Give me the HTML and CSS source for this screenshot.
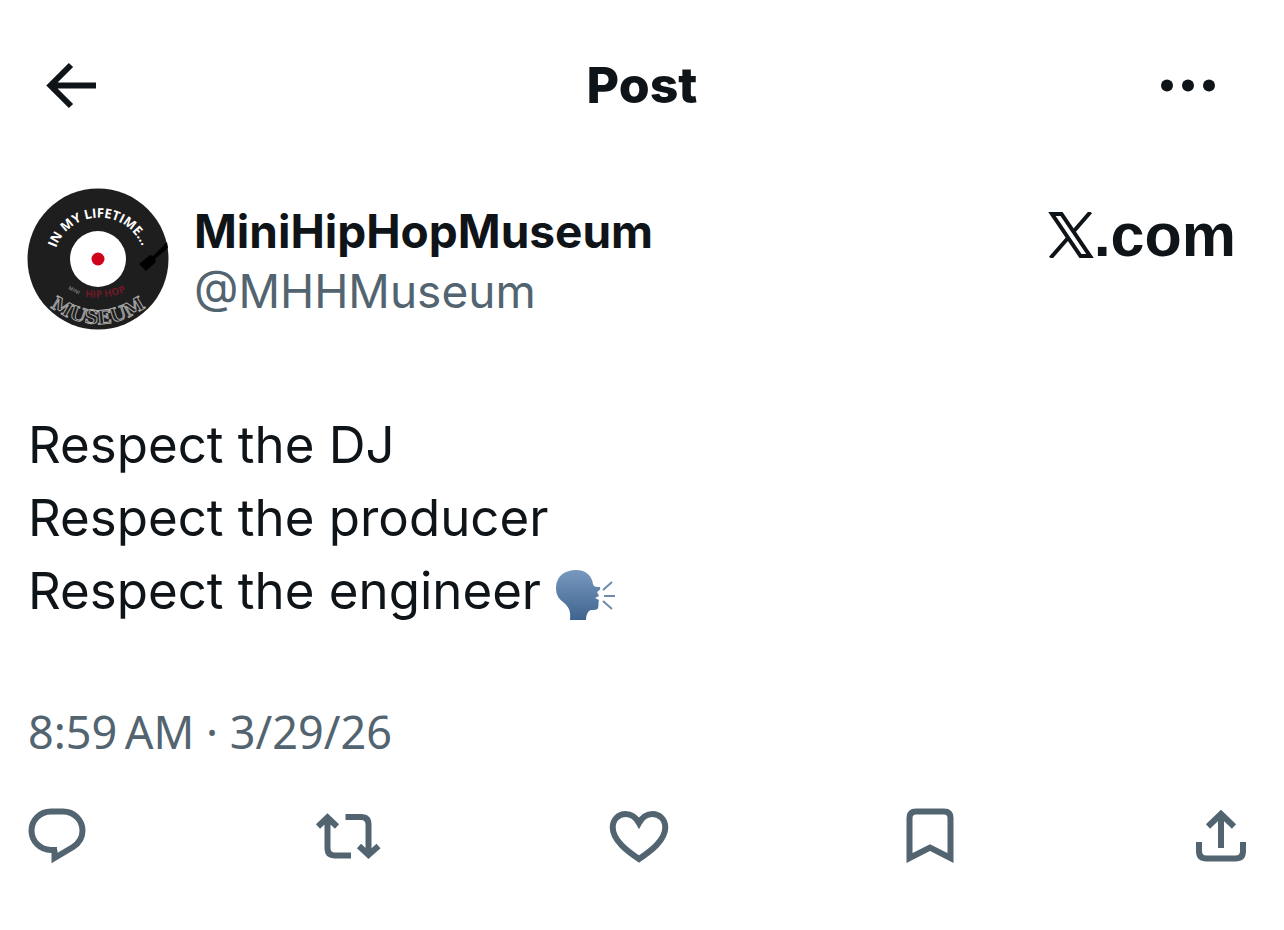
FILE: index.html
```html
<!DOCTYPE html>
<html lang="en">
<head>
  <meta charset="UTF-8" />
  <meta name="viewport" content="width=device-width, initial-scale=1" />
  <title>Post</title>
  <link rel="stylesheet" href="styles.css">
</head>
<body>
  <header class="topbar">
    <button type="button" class="icon-btn" aria-label="Back">
      <svg class="back-icon" width="56" height="56" viewBox="0 0 56 56">
        <path d="M30 8 L9.500 28.500 L30 49 M9.500 28.500 H55" />
      </svg>
    </button>
    <h1>Post</h1>
    <button type="button" class="icon-btn more-btn" aria-label="More">
      <svg width="56" height="56" viewBox="0 0 56 56">
        <circle cx="7" cy="28.500" r="6" />
        <circle cx="28" cy="28.500" r="6" />
        <circle cx="49" cy="28.500" r="6" />
      </svg>
    </button>
  </header>

  <main class="post">
    <div class="author">
      <svg class="avatar" width="142" height="142" viewBox="0 0 142 142">
        <defs>
          <path id="topArc" d="M29 60 A 46 46 0 0 1 118 70" />
          <path id="miniArc" d="M41 101 L60 111" />
          <path id="hiphopArc" d="M58 109 Q 80 112 104 102" />
          <path id="bottomArc" d="M18 115 Q 71 157 124 115" />
        </defs>
        <circle cx="71" cy="71" r="70.500" fill="#1e1e1e" />
        <circle cx="71" cy="71" r="28" fill="#fff" />
        <circle cx="71" cy="71" r="6.500" fill="#d0021b" />
        <path d="M140 54 L141 60 L128 71 L129 74 L119 83 L112 76 L123 67 L126 68 Z" fill="#000" />
        <text class="label-top"><textPath href="#topArc">IN MY LIFETIME...</textPath></text>
        <text class="label-mini"><textPath href="#miniArc">MINI</textPath></text>
        <text class="label-hiphop"><textPath href="#hiphopArc">HIP HOP</textPath></text>
        <text class="label-bottom"><textPath href="#bottomArc" startOffset="50%">MUSEUM</textPath></text>
      </svg>
      <div class="names">
        <div class="name">MiniHipHopMuseum</div>
        <div class="handle">@MHHMuseum</div>
      </div>
      <div class="brand">
        <svg width="46" height="46" viewBox="0 0 46 46" aria-label="X">
          <path d="M4 2 H13.500 L42 44 H32.500 Z" />
          <path d="M42.500 0 L26 19 M20 26 L2.500 46" />
        </svg>
        <span>.com</span>
      </div>
    </div>

    <p class="text">Respect the DJ<br>Respect the producer<br>Respect the engineer
      <svg class="emoji" width="62" height="54" viewBox="0 0 62 54" aria-label="Speaking head">
        <defs>
          <linearGradient id="head" x1="0" y1="0" x2="0" y2="1">
            <stop offset="0" stop-color="#7899bf" />
            <stop offset="1" stop-color="#3f648f" />
          </linearGradient>
        </defs>
        <path fill="url(#head)" d="M15 52 C16 43 14 39 8 34 C3 30 1 26 1 20 C1 8 10 2 21 2 C31 2 37 8 38 16 C39 19 41 19 45 19 C46 21 44 23 42 24 L44 28 L40 30 L44 32 C43 34 44 37 43 40 C42 43 36 41 34 43 C32 45 31 48 31 52 Z" />
        <path fill="none" stroke="#6f8ba8" stroke-width="2" d="M48 22 L57 14 M49 28 H60 M48 33 L57 41" />
      </svg>
    </p>

    <div class="meta">8:59&#8239;AM · 3/29/26</div>

    <div class="actions">
      <button type="button" class="icon-btn" aria-label="Reply">
        <svg width="68" height="60" viewBox="0 0 68 60">
          <path d="M34 44 H28 C17 44 8.500 35 8.500 24.500 S17 5.500 28 5.500 H40 C51 5.500 59.500 14 59.500 24.500 C59.500 32 55.500 37.500 50 41 L31.500 52 V44" />
        </svg>
      </button>
      <button type="button" class="icon-btn" aria-label="Repost">
        <svg width="68" height="60" viewBox="0 0 68 60">
          <path d="M4 20.500 L13.500 11.500 L23 20.500 M13.500 12 V42 Q13.500 49.500 21 49.500 H37 M31.500 11 H47 Q54.500 11 54.500 18.500 V49 M45 40 L54.500 49 L64.500 40" />
        </svg>
      </button>
      <button type="button" class="icon-btn" aria-label="Like">
        <svg width="68" height="60" viewBox="0 0 68 60">
          <path d="M34 53 C23 45.500 7.700 34.500 7.700 21.500 C7.700 13.500 13.500 8 20.500 8 C26.500 8 31 11.500 34 17 C37 11.500 41.500 8 47.500 8 C54.500 8 60.300 13.500 60.300 21.500 C60.300 34.500 45 45.500 34 53 Z" />
        </svg>
      </button>
      <button type="button" class="icon-btn" aria-label="Bookmark">
        <svg width="68" height="60" viewBox="0 0 68 60">
          <path d="M13.500 52 V12 Q13.500 5.500 20 5.500 H48 Q54.500 5.500 54.500 12 V52 L34 41.500 Z" />
        </svg>
      </button>
      <button type="button" class="icon-btn" aria-label="Share">
        <svg width="68" height="60" viewBox="0 0 68 60">
          <path d="M21 20.500 L34 8 L47 20.500 M34 8 V42 M12 36 V45 Q12 52.500 19.500 52.500 H48.500 Q56 52.500 56 45 V36" />
        </svg>
      </button>
    </div>
  </main>
</body>
</html>
```

FILE: styles.css
```css
* {
  box-sizing: border-box;
}
body {
  margin: 0;
  background-color: #fff;
  color: #0f1419;
  font-family: Inter, "Noto Sans", sans-serif;
}
svg {
  display: block;
}
.icon-btn {
  padding: 0;
  border: none;
  background: none;
  color: inherit;
  cursor: pointer;
}

/* Top bar */
.topbar {
  display: grid;
  grid-template-columns: 1fr auto 1fr;
  align-items: center;
  padding: 50px 41px;
}
.topbar .icon-btn {
  justify-self: start;
}
.topbar .more-btn {
  justify-self: end;
  margin-right: 27px;
}
.topbar h1 {
  margin: 0;
  font-size: 50px;
  line-height: 70px;
  font-weight: 800;
}
.topbar svg {
  fill: #0f1419;
}
.topbar .back-icon {
  fill: none;
  stroke: #0f1419;
  stroke-width: 6;
}

/* Author */
.author {
  display: flex;
  align-items: center;
  padding: 18px 48px 0 27px;
}
.names {
  flex: 1;
  margin-left: 25px;
  padding-top: 4px;
}
.name,
.handle {
  font-size: 46px;
  line-height: 60px;
}
.name {
  font-weight: 700;
}
.handle {
  color: #536471;
}
.brand {
  display: flex;
  align-items: center;
  margin-bottom: 48px;
  font-family: "Liberation Sans", sans-serif;
  font-size: 61px;
  line-height: 70px;
  font-weight: 700;
}
.brand svg {
  fill: none;
  stroke: #0f1419;
  stroke-width: 4;
}

/* Record label on the avatar */
.avatar text {
  font-family: "Open Sans", sans-serif;
  font-weight: 700;
}
.label-top {
  fill: #fff;
  font-size: 13px;
}
.label-mini {
  fill: #777;
  font-size: 5px;
}
.label-hiphop {
  fill: #6d1a26;
  font-size: 10px;
}
.avatar .label-bottom {
  fill: #1e1e1e;
  stroke: #aaa;
  stroke-width: 1;
  font-family: "DejaVu Serif", serif;
  font-size: 19px;
  text-anchor: middle;
}

/* Post body */
.text {
  margin: 78px 28px 0;
  font-size: 51px;
  line-height: 73px;
}
.emoji {
  display: inline-block;
  vertical-align: -13px;
}
.meta {
  margin: 75px 28px 0;
  color: #536471;
  font-family: "Noto Sans", sans-serif;
  font-size: 45px;
  line-height: 60px;
}
.actions {
  display: flex;
  justify-content: space-between;
  padding: 44px 29px 60px 23px;
}
.actions svg {
  fill: none;
  stroke: #536471;
  stroke-width: 6;
}
```
